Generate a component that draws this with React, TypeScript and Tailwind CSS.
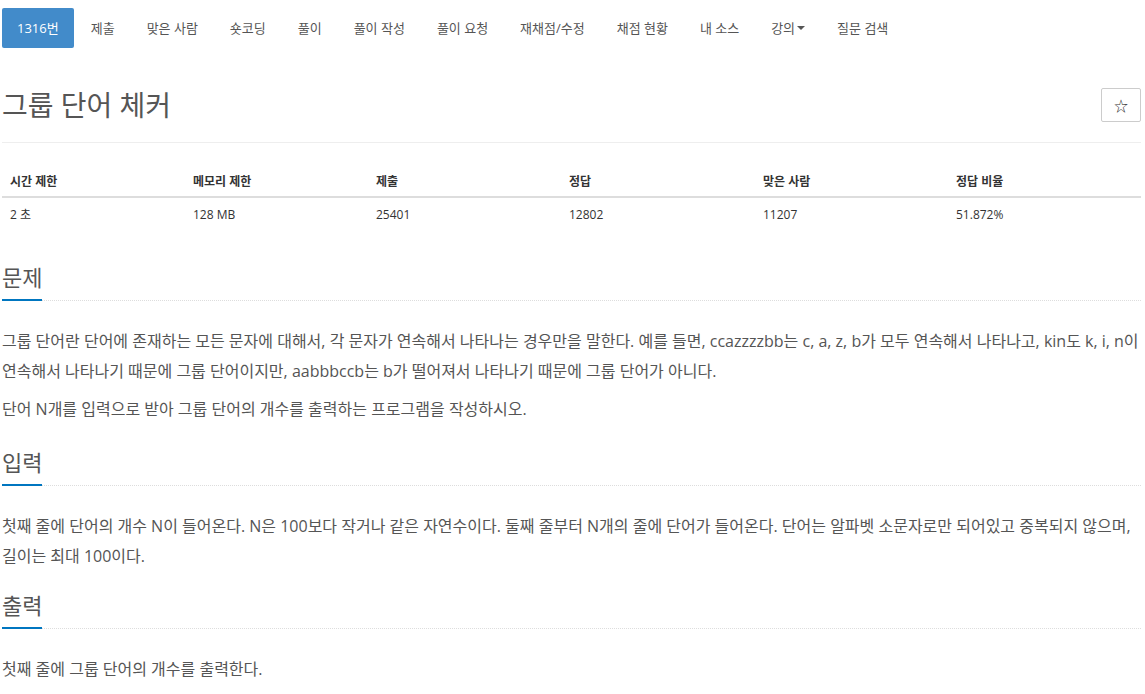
import React from "react";

const font = { fontFamily: '"Open Sans", "Noto Sans CJK KR", sans-serif' };

const navItems = ["제출", "맞은 사람", "숏코딩", "풀이", "풀이 작성", "풀이 요청", "재채점/수정", "채점 현황", "내 소스"];

function Section({ title, className, children }: { title: string; className?: string; children: React.ReactNode }) {
  return (
    <section className={className}>
      <div className="border-b border-dotted border-[#ddd] flex">
        <h2 className="text-[22px] leading-[32px] text-[#555] font-normal border-b-2 border-[#0076c0] pb-[6px] -mb-px">
          {title}
        </h2>
      </div>
      <div className="pt-[25px] text-[16px] leading-[30px] text-[#555]">{children}</div>
    </section>
  );
}

export default function App() {
  return (
    <div className="bg-white min-h-[694px] pl-[2px] pr-[4px]" style={font}>
      <ul className="flex pt-[8px] text-[13px] leading-[20px]">
        <li className="bg-[#428bca] text-white px-[15px] py-[10px] rounded-[2px]">1316번</li>
        {navItems.map((n) => (
          <li key={n} className="ml-[2px] px-[15px] py-[10px] text-[#555]">
            {n}
          </li>
        ))}
        <li className="ml-[2px] px-[15px] py-[10px] text-[#555] flex items-center">
          강의
          <span className="ml-[2px] inline-block w-0 h-0 border-l-[4px] border-r-[4px] border-t-[4px] border-l-transparent border-r-transparent border-t-[#555]" />
        </li>
        <li className="ml-[2px] px-[15px] py-[10px] text-[#555]">질문 검색</li>
      </ul>

      <div className="flex items-center justify-between mt-[37px] pb-[17px] border-b border-[#eee]">
        <h1 className="text-[28px] leading-[40px] text-[#555] font-normal">그룹 단어 체커</h1>
        <button className="w-[40px] h-[34px] border border-[#ccc] rounded-[2px] text-[14px] text-[#333] flex items-center justify-center">
          ☆
        </button>
      </div>

      <table className="mt-[22px] w-full text-[12px] text-[#333] border-collapse">
        <thead>
          <tr className="border-b-2 border-[#ddd]">
            <th className="w-[183px] text-left font-bold px-[8px] pt-[8px] pb-[6px] leading-[17px]">시간 제한</th>
            <th className="w-[183px] text-left font-bold px-[8px] pt-[8px] pb-[6px] leading-[17px]">메모리 제한</th>
            <th className="w-[193px] text-left font-bold px-[8px] pt-[8px] pb-[6px] leading-[17px]">제출</th>
            <th className="w-[194px] text-left font-bold px-[8px] pt-[8px] pb-[6px] leading-[17px]">정답</th>
            <th className="w-[193px] text-left font-bold px-[8px] pt-[8px] pb-[6px] leading-[17px]">맞은 사람</th>
            <th className="w-[193px] text-left font-bold px-[8px] pt-[8px] pb-[6px] leading-[17px]">정답 비율</th>
          </tr>
        </thead>
        <tbody>
          <tr>
            <td className="px-[8px] py-[8px] leading-[17px]">2 초</td>
            <td className="px-[8px] py-[8px] leading-[17px]">128 MB</td>
            <td className="px-[8px] py-[8px] leading-[17px]">25401</td>
            <td className="px-[8px] py-[8px] leading-[17px]">12802</td>
            <td className="px-[8px] py-[8px] leading-[17px]">11207</td>
            <td className="px-[8px] py-[8px] leading-[17px]">51.872%</td>
          </tr>
        </tbody>
      </table>

      <div className="mt-[30px] flex flex-col">
        <Section title="문제">
          <p className="mb-[8px]">
            그룹 단어란 단어에 존재하는 모든 문자에 대해서, 각 문자가 연속해서 나타나는 경우만을 말한다. 예를 들면, ccazzzzbb는 c, a, z, b가 모두 연속해서 나타나고, kin도 k, i, n이 연속해서 나타나기 때문에 그룹 단어이지만, aabbbccb는 b가 떨어져서 나타나기 때문에 그룹 단어가 아니다.
          </p>
          <p>단어 N개를 입력으로 받아 그룹 단어의 개수를 출력하는 프로그램을 작성하시오.</p>
        </Section>
        <Section title="입력" className="mt-[22px]">
          <p>
            첫째 줄에 단어의 개수 N이 들어온다. N은 100보다 작거나 같은 자연수이다. 둘째 줄부터 N개의 줄에 단어가 들어온다. 단어는 알파벳 소문자로만 되어있고 중복되지 않으며, 길이는 최대 100이다.
          </p>
        </Section>
        <Section title="출력" className="mt-[18px]">
          <p>첫째 줄에 그룹 단어의 개수를 출력한다.</p>
        </Section>
      </div>
    </div>
  );
}
